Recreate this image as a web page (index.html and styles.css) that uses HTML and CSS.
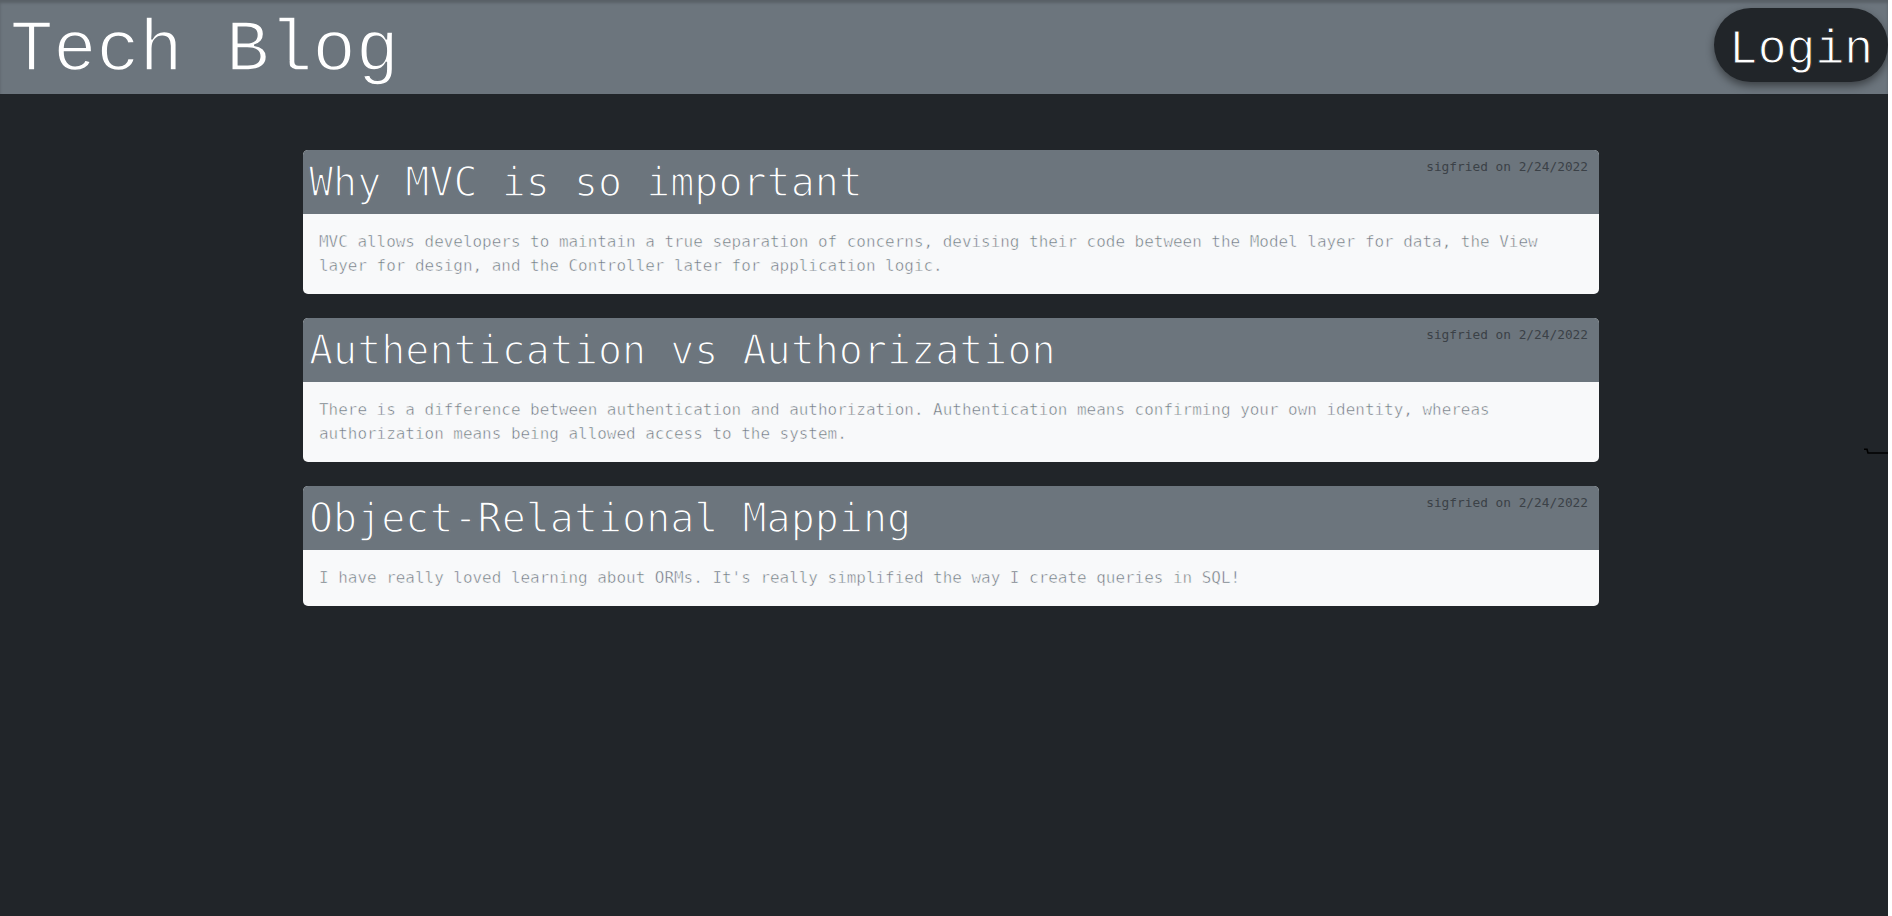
FILE: index.html
```html
<!DOCTYPE html>
<html lang="en">
<head>
<meta charset="utf-8">
<title>Tech Blog</title>
<link rel="stylesheet" href="styles.css">
</head>
<body>
<div class="page">
  <header class="topbar">
    <div class="brand">Tech Blog</div>
    <a class="login" href="#">Login</a>
  </header>
  <main class="posts">
    <article class="post">
      <div class="post-head">
        <h1 class="post-title">Why MVC is so important</h1>
        <span class="post-meta">sigfried on 2/24/2022</span>
      </div>
      <div class="post-body">MVC allows developers to maintain a true separation of concerns, devising their code between the Model layer for data, the View layer for design, and the Controller later for application logic.</div>
    </article>
    <article class="post">
      <div class="post-head">
        <h1 class="post-title">Authentication vs Authorization</h1>
        <span class="post-meta">sigfried on 2/24/2022</span>
      </div>
      <div class="post-body">There is a difference between authentication and authorization. Authentication means confirming your own identity, whereas authorization means being allowed access to the system.</div>
    </article>
    <article class="post">
      <div class="post-head">
        <h1 class="post-title">Object-Relational Mapping</h1>
        <span class="post-meta">sigfried on 2/24/2022</span>
      </div>
      <div class="post-body">I have really loved learning about ORMs. It's really simplified the way I create queries in SQL!</div>
    </article>
  </main>
  <svg class="mark" width="28" height="8" viewBox="0 0 28 8"><path d="M0 1.2 H3 L4 5 H27" fill="none" stroke="#000" stroke-width="1.6"/></svg>
</div>
</body>
</html>
```

FILE: styles.css
```css
html, body {
  margin: 0;
  padding: 0;
  background: #ffffff;
}

.page {
  position: relative;
  width: calc(100% - 4px);
  height: 916px;
  overflow: hidden;
  background: #212529;
  font-family: "DejaVu Sans Mono", "Liberation Mono", monospace;
}

.topbar {
  height: 94px;
  box-sizing: border-box;
  background: #6c757d;
  box-shadow: inset 0 3px 3px rgba(0, 0, 0, 0.18);
  display: flex;
  justify-content: space-between;
  align-items: flex-start;
}

.brand {
  font-family: "Liberation Mono", monospace;
  font-size: 72px;
  line-height: 72px;
  color: #ffffff;
  padding: 15px 0 0 10px;
  -webkit-text-stroke: 1.6px #6c757d;
}

.login {
  margin-top: 8px;
  height: 74px;
  box-sizing: border-box;
  padding: 10px 15px 0 15px;
  font-family: "Liberation Mono", monospace;
  font-size: 48px;
  line-height: 64px;
  color: #ffffff;
  text-decoration: none;
  background: #212529;
  border-radius: 37px;
  box-shadow: 0 4px 8px rgba(0, 0, 0, 0.45);
  -webkit-text-stroke: 1px #212529;
}

.posts {
  margin-left: 303px;
  width: 1296px;
  padding-top: 56px;
  display: flex;
  flex-direction: column;
  gap: 24px;
}

.post {
  border-radius: 5px;
  overflow: hidden;
  background: #f8f9fa;
}

.post-head {
  background: #6c757d;
  display: flex;
  justify-content: space-between;
  align-items: flex-start;
  padding: 8px 11px 8px 6px;
}

.post-title {
  margin: 0;
  font-weight: normal;
  font-size: 40px;
  line-height: 48px;
  color: #ffffff;
  -webkit-text-stroke: 1.4px #6c757d;
}

.post-meta {
  font-size: 12.8px;
  line-height: 18px;
  color: #3b4147;
}

.post-body {
  padding: 16px 16px;
  font-size: 15.95px;
  line-height: 24px;
  color: #6c757d;
  -webkit-text-stroke: 0.5px #f8f9fa;
}

.mark {
  position: absolute;
  left: 1864px;
  top: 448px;
}
```
